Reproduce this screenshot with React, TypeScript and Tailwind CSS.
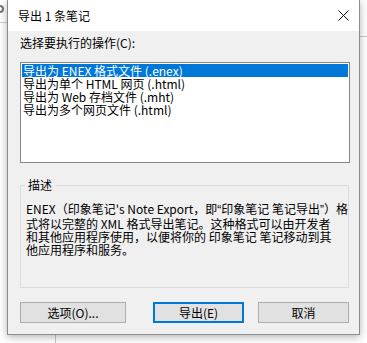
import React from "react";

const items = [
  "导出为 ENEX 格式文件 (.enex)",
  "导出为单个 HTML 网页 (.html)",
  "导出为 Web 存档文件 (.mht)",
  "导出为多个网页文件 (.html)",
];

const q = "font-['Liberation_Sans',sans-serif]";

export default function App() {
  return (
    <div className="relative h-[343px] w-[367px] overflow-hidden bg-white font-['Noto_Sans_CJK_SC',sans-serif] text-[12px] text-black">
      {/* desktop behind the dialog */}
      <div className="absolute left-0 top-[22px] h-px w-[8px] bg-[#d0d0d0]" />
      <div className="absolute right-0 top-[36px] h-px w-[8px] bg-[#c8c8c8]" />
      <div className="absolute left-[55px] top-[330px] h-[13px] w-px bg-[#c8c8c8]" />
      <div className="absolute left-[-4px] top-[5px] h-[8px] w-[8px] rounded-full border-2 border-[#777]" />

      <div className="relative ml-[7px] flex h-[335px] w-[353px] flex-col border-x border-b border-[#8c8c8c] bg-[#f0f0f0] shadow-[0_2px_8px_rgba(0,0,0,0.3)]">
        <div className="flex h-[31px] items-center justify-between bg-white pl-[10px] pr-[9px]">
          <span className="leading-[14px]">导出 1 条笔记</span>
          <svg width="11" height="11" viewBox="0 0 11 11" className="mr-[1px]">
            <path d="M0.5 0.5L10.5 10.5M10.5 0.5L0.5 10.5" stroke="#111" strokeWidth="1" />
          </svg>
        </div>

        <div className="flex flex-1 flex-col pl-[12px] pr-[9px] pt-[5px]">
          <div className="leading-[14px]">选择要执行的操作(C):</div>

          <div className="mt-[12px] h-[101px] border border-[#828790] bg-white p-px">
            {items.map((t, i) => (
              <div
                key={t}
                className={
                  i === 0
                    ? "h-[13px] whitespace-nowrap bg-[#0078d7] pl-px leading-[13px] text-white"
                    : "h-[13px] whitespace-nowrap pl-px leading-[13px]"
                }
              >
                {t}
              </div>
            ))}
          </div>

          <div className="relative mr-px mt-[22px] h-[103px] border border-[#dcdcdc] pl-[5px] pt-[16px]">
            <span className="absolute left-[4px] top-[-8px] bg-[#f0f0f0] px-[3px] leading-[14px]">描述</span>
            <div className="whitespace-nowrap leading-[13px]">
              ENEX（印象笔记's Note Export，即<span className={q}>{"\u201c"}</span>印象笔记 笔记导出
              <span className={q}>{"\u201d"}</span>）格
            </div>
            <div className="whitespace-nowrap leading-[13px]">
              式将以完整的 XML 格式导出笔记。这种格式可以由开发者
            </div>
            <div className="whitespace-nowrap leading-[13px]">
              和其他应用程序使用，以便将你的 印象笔记 笔记移动到其
            </div>
            <div className="whitespace-nowrap leading-[13px]">他应用程序和服务。</div>
          </div>

          <div className="mr-px mt-[14px] flex">
            <button className="h-[21px] w-[106px] border border-[#adadad] bg-[#e1e1e1] leading-[14px]">
              选项(O)...
            </button>
            <div className="ml-auto flex gap-[14px]">
              <button className="h-[21px] w-[91px] border-2 border-[#0078d7] bg-[#e1e1e1] leading-[14px]">
                导出(E)
              </button>
              <button className="h-[21px] w-[91px] border border-[#adadad] bg-[#e1e1e1] leading-[14px]">
                取消
              </button>
            </div>
          </div>
        </div>
      </div>
    </div>
  );
}
